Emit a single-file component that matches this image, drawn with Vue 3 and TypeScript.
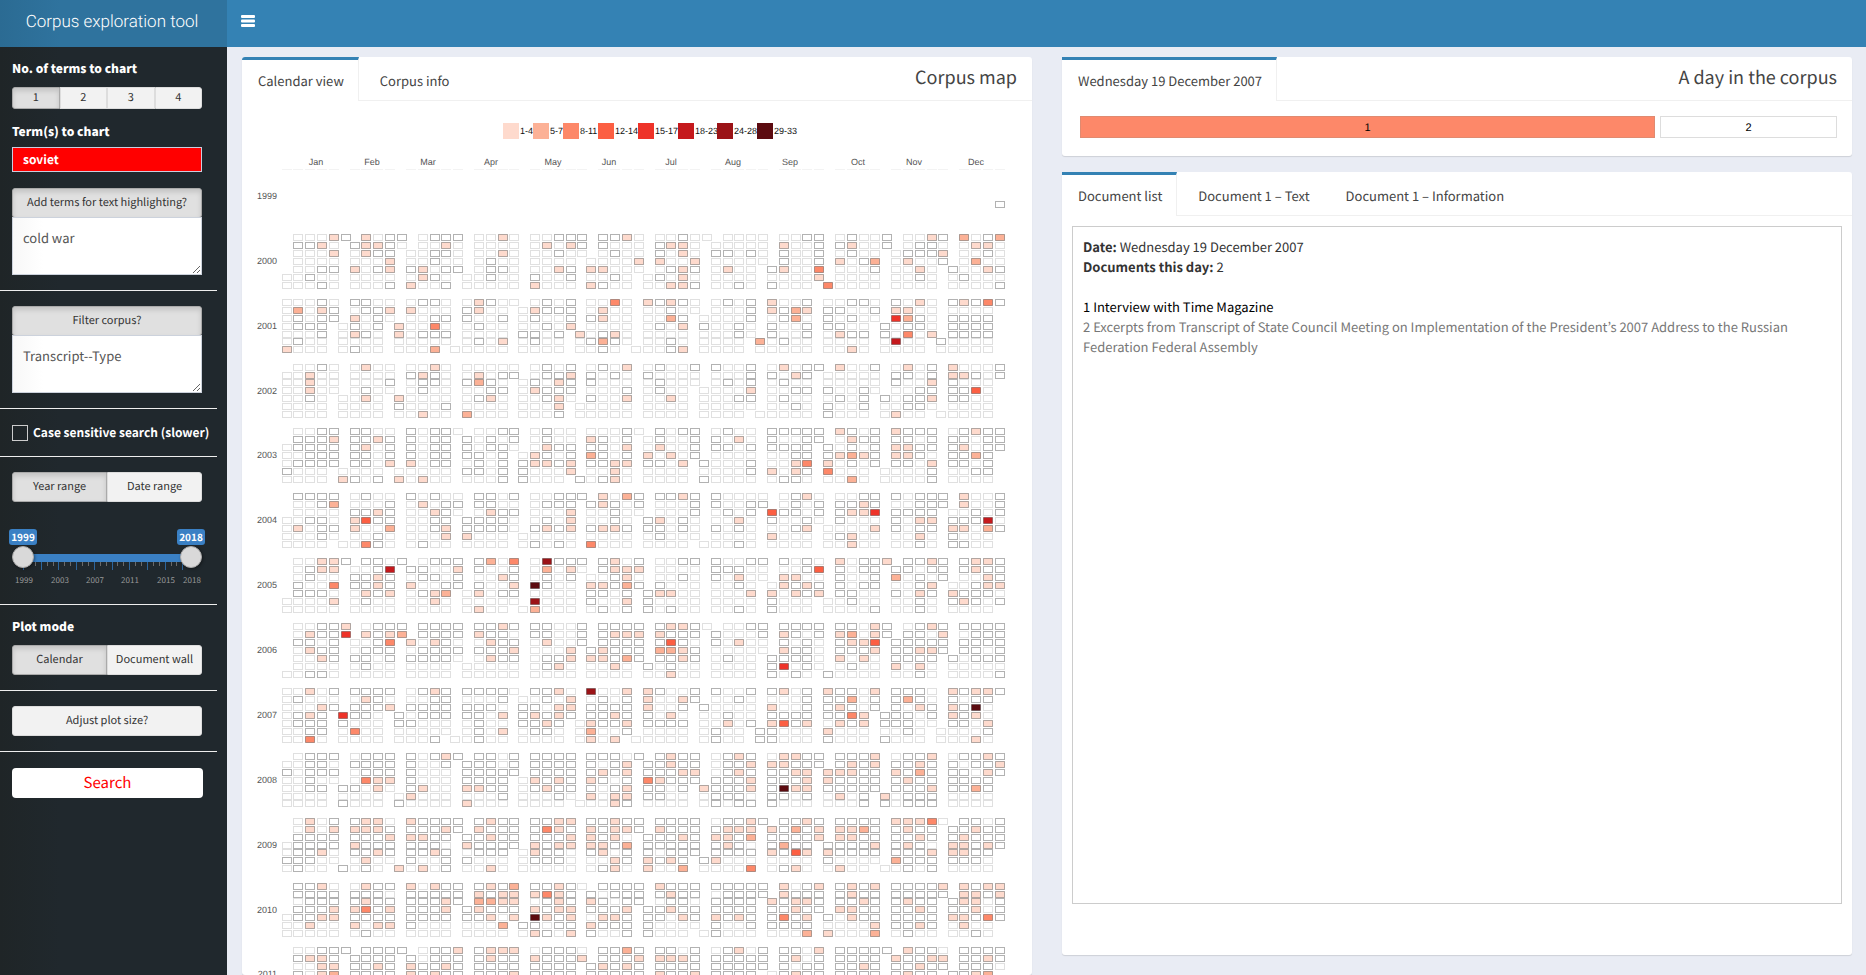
<script setup lang="ts">
import { ref } from 'vue'

type Cell = { x: number; y: number; kind: string }

// One entry per year; one line per weekday (Monday first); one group per month.
// "." no document, "o" document without a match, 1-8 legend class.
const calendar: Record<number, string[]> = {
  2000: [
    '...1o 1.oo .ooo ..1. ..ooo oo1. ..o.. .... ..oo .o..o ..1o 2.o2',
    'oo1. o11o. ..1. .... .1.1o o... o11. ..... 1..o o1..o .oo. .11.',
    '...1 .1oo ..oo. ..1. ..o.. .o.. o.1. oo.o. o..o .o.. .ooo1 ..o.',
    '.... ...1 ..o.. .o.. .... ....1 1..1 ..... o..o 1.o2 .1..o .2..',
    '..oo 1.o1 o1.oo .oo. ..1o 11... .o1o .1.. o1..3 ...o ..1. o..1o',
    '..o.. .... .1o. ..o.. o..o ..o. .o.1. .... ....1 .... ..o. .o...',
    '...o. ...o 1..o ..... 1... 1o.. ..11o ..o. o... 3.... .... ....o',
  ],
  2001: [
    '...o. oo.. .oo. .1o.. .o.o ..3. 1o1o. .o.o 1..o ..oo. o.1. o1o3o',
    '.2.1o .oo1 1... o1.. .1ooo .1.. ..o.. ...o 1o21 oo..o 11.. ....',
    '.o.oo 1.o. ..oo o..o .o..o o1.. ..2o ....o .o2. o.o.. 52o. oooo',
    '.ooo .o.o 1..3. .o.. ..o.1 .... .o.1 o..o. o..o oo.. o.oo. oooo',
    '...o .1o. 1.ooo .... oo.o 1.o1. .... ...o. o..o .1oo o.3.1 oooo',
    '.o.. .... ..... .o.1 .o.. .o2o. ..o. .... 2.o.. .... .6.. o....',
    '1... .o.. ...2 ..... .... ..o. ...o1 .... ..... ..1. .... .....',
  ],
  2002: [
    '..o. .1.. ..1. ..... .o.o .o.1 .o..o o..o .1.oo 1..o .1.o 1...o',
    '..1.. .... o1o. .1.oo .oo1 o.o. o.... ...o o.1o ..... oo.o 11o.o',
    '..1.. ...o .oo. o2o. .o.1o o... .o... .o.o .o.. ..... o..1 o...',
    '..1.. .o.. .o.. ..oo .1ooo ...o .o.. ....1 ..oo o..o. ..oo oo4.',
    '..o. ..1. 1.... .o1. ..o1. o..1 ..1. ...oo .o.. .o.o o.oo1 oo..',
    '.... .... o...o .... ...1 ..... .... ..... ..o. o..o ..oo. ....',
    '.... .... ..1.. 2... ...o ..... .... .... ..... o... .1.. .....',
  ],
  2003: [
    '..oo oo.. o.oo. ..oo .o.. ...o. o.oo .o.. ooooo 1o.o 1ooo .o1oo',
    'ooo1 oo1o o.oo o.o.o .o.. 1o.o .o..o o.1. o..oo .1oo oo.o oo.oo',
    '.oooo o1.o o.oo o.oo. .1oo oo.1 .1..o oo.o oooo o.o.o 11oo o1.oo',
    '..ooo oo.o o.oo oo.o .1o.o 2o.o 1.1.o .... ..oo o121o 11o. oo2o',
    '.oooo oo.1 1.oo .o.o o11o1 oo11 oo.1 o...o ..13 1.o.o oo.1 oo.o',
    'o... .... ..... oo.o o...1 ..1. .... ....o 1.1o 3... ....o ..oo',
    '.... 1o.o 1.1.. ...o o... o.o1. .... o.... .oo. ..2. ....o ....',
  ],
  2004: [
    'oooo .o.. o.o.. oo.o ..ooo 1.2o oo1o o.... .o1. ..oo o.ooo 1..o',
    '..o2 ...o .1.oo oo.. .ooo o1o.o ...o o..oo .o.o oo1o ..ooo 1..o',
    '.... oo1o ..1o. .1oo ...1 ..o.. ...o .o.o 4oo.o o115 oooo ..o.o',
    '..oo. 14oo ..oo oooo. .o.1 ..o. o1.o. ..1. o..o. o... o.11 ooo6.',
    '.1.oo 1..2 ..o1 oooo. o1o1 o11o oo.o. o.o. ..o1 ....1 o.oo 11.2o',
    '...o. ..o. ...1 1... ..... .... .o... .... 1... .o1.. ..1. o...',
    '.... ..3o. .o.. .... .o.o. 3... .... ...o. .... ..1.. ..o. oo..',
  ],
  2005: [
    '..11o oo.o .ooo o2.3 .7ooo o1.o ..oo o..oo o.o. 1.oo1 oo1o o11o',
    '.o11 ..o6 oo..1 o..o .2.1. o111 .... ooo.. ..o4 o.oo oo.oo o1oo',
    '.o.. oo1o .oo.o ..1o .o.o ..o1. ..o. o.1.. 11.. o..o 2.o.o ..1o',
    'o..3 oo1o 1..oo o..1 8o.. 11o2o o... ..o. .1o1o o.oo ..o1 ..o11',
    'ooo. .1o1 .o12 .1.oo .... oo.o o11.. ...1 1.1o1 oo.. o.1o 1ooo.',
    '....1 .o.. ..1. ..... 7... o..1 o.... .... o... ..o.. ..o. o1o.o',
    '..... .... .... .1.. .2... .o.o o.o.. ..o. o... ....o ..o. ....',
  ],
  2006: [
    '..oo1 .ooo oooo oo1o oo..o oooo o11o. ..oo oooo oo.1o .o1o oooo',
    '.1oo5 1o12 oooo 1oo. oo..o o111 1ooo o...o 1o.o 12.1o oo.1 .ooo',
    'oo.o ..o3 1.1o. .1oo .1..o oooo o4o. o.1.. o.o. o114 ooooo oooo',
    '.1oo .ooo .oooo ooo1 ...1 o1ooo 221o ..... 1oo. ooo1 oo11o oo.o',
    '..1o oo.o oooo. .1oo .oo1 11o2o oo1o .o.. oooo. 1.1. oooo o.ooo',
    '.... .o.. .... ..... .o1. ..1. o.o.. .... o5.o. .o.. 1.1. .....',
    '..oo. .... .... ..... .... .... ..1.. .... o.o. o.... ..o. ....o',
  ],
  2007: [
    '..1.o oooo .o1o oooo. oo1. 7..1 1o..o o..o o1.o 1oo.1 ooo. 1o11o',
    '.o... .1o. ..oo ...o ..o.1 .o.o 1..1o ..o. ...o oo2.o o2o. o.oo',
    '...1o ooo1 oooo ooo. oo.11 oooo 1..o o.... 1..o o1o.o o.1o 1o8.',
    '.o1o 5oo. o.ooo oo.1 o1o1o oo1o o.1. ..o.. oooo oo31 ooo.o 1o1.',
    '.ooo o... oo... .o.. oo1o .1oo1 oooo ..1.o 14o1 .1o1 ooo.. oo.1',
    '..oo .3.. ..... .o.1 .oo. .2..o .... .o.. oo... 1... ..o. ....o',
    '..3. .... ...o ..o.. .... .1.1 ..... .o.. oo... o... o... ...1.',
  ],
  2008: [
    '.ooo .ooo o.o1o oo.o oooo ooo.o o1oo .o1o .11oo ooo1 .oo1 .oo1o',
    '..oo. oooo o..o ooo.o oooo o.o1 oo1oo .oo1 11ooo o1o1 oo1o o.oo1',
    'o.ooo .ooo o... ooooo oooo o1o1 ooo11 .o1o oo11 111oo 1o2o oo.1o',
    '..o.. .311 o... oooo .1o1o 1o.o 31ooo ooo1 ooo1 1oooo o1oo oooo',
    '..oo oo.1. o1.. 11oo .o1oo o.o1 oo.o 1ooo1 o811 ooooo ooo1 oo2o',
    '.... .... .1... ...o ...o. 1.11 oo.. .ooo. oo.o .1.o 1.ooo ....',
    '.... o... o.... 1... .... ...1o .... .o.oo o... ...o o.ooo ....',
  ],
  2009: [
    '.1.o o11. 1oooo o1oo oo11 oo1oo oooo .oo1o oo1o oooo 1113. oo.o',
    '.1.1 111o ooo1o 1ooo o31o 1o11o 1ooo o111 1o2o1 112o o1oo oo1oo',
    'oooo ooo1 11oo oo1oo ooo1 1o1. ooo1o 11o2 oooo1 11oo oo1o o1ooo',
    '.oooo 1ooo ooo. 1oooo 1o11 11o2 ooooo o1o. o2oo oooo1 o1o. 11o1o',
    '.oo1. oo1o oo1o .ooo .1oo. o1.o o.ooo oooo 1o41 1oooo ooo1 11oo',
    'ooo.. .1.. o..o o... .ooo. ..1o 1o1o o1... .... o.... 2ooo ooo.',
    '.o.. o.o. 1.1.o ..1. ..... .o1. 1..2 ....3 .o1. .1.. ..o.o ....',
  ],
  2010: [
    'oo1. .1oo 1.1oo o1o2 oo1o. oooo 1ooo ooooo 1.o1 o1o1 oooo1 1o11',
    'oooo ooo. ooooo 1o11 131o o.ooo o1oo .oooo 1ooo o1oo ooooo 11o1',
    '.ooo o1oo ooo1o 2211 .o1o 1o.oo .oo. oooo 1o11o oo1o o1oo o11.o',
    'ooo1 13o1 ooo1 o1ooo 1o11 ooo1 oo1oo oooo oo1oo 11oo oo1o oo1.o',
    '.oo11 oooo oooo oo1.1 81o1 .11o oo.1o 1o1o o3o1 o.1oo oooo 11o3o',
    '..1.. 1.11 o... ...2 oo.oo 1ooo o.... o..o oooo ....1 oo1o .1..',
    '..... .o.. .... .... .1o.1 o..o o... .o... ...2 1...2 .o.. ..o.',
  ],
  2011: [
    '..ooo oooo .oo1 o111 .ooo. oo2o oo.o .o1.o oo.1 ooooo 1oo. oooo',
    'o11o oooo o.ooo o1oo 1ooo1 ooo1 111o ooooo o1.o oooo 1oo11 oo1o',
    '..11 oo1o 1oo1o oooo oooo o1o1o oooo ooooo o.oo oo1o oo1oo ooo.',
    'o.12 oooo 1o1oo ooo1 oooo ooooo 1oo1 oooo .o1oo oooo o1oo oo12',
  ],
}

const firstYear = 1999
const weekStep = 11.77
const monthGap = 9.17
const dayStep = 7.94
const yearStep = 64.87

const cellX = (week: number, month: number) =>
  Math.round(44.7 + week * weekStep + month * monthGap - 5) + 0.5
const cellY = (year: number, day: number) =>
  Math.round(71.5 + (year - firstYear) * yearStep + day * dayStep - 3.5) + 0.5

const weekdayOf = (year: number, month: number, day: number) =>
  (new Date(Date.UTC(year, month, day)).getUTCDay() + 6) % 7

const weekOf = (year: number, month: number, day: number) => {
  const dayOfYear = (Date.UTC(year, month, day) - Date.UTC(year, 0, 1)) / 86400000
  return Math.floor((dayOfYear + weekdayOf(year, 0, 1)) / 7)
}

function buildCells(): Cell[] {
  const list: Cell[] = []
  for (const [key, rows] of Object.entries(calendar)) {
    const year = Number(key)
    rows.forEach((row, weekday) => {
      row.split(' ').forEach((group, month) => {
        const first = ((weekday - weekdayOf(year, month, 1) + 7) % 7) + 1
        group.split('').forEach((mark, i) => {
          const week = weekOf(year, month, first + i * 7)
          const kind = mark === '.' ? 'none' : mark === 'o' ? 'zero' : 'c' + mark
          list.push({ x: cellX(week, month), y: cellY(year, weekday), kind })
        })
      })
    })
  }
  // Light cells first so that stronger outlines stay on top.
  const weight = (c: Cell) => (c.kind === 'none' ? 0 : c.kind === 'zero' ? 1 : 2)
  list.sort((a, b) => weight(a) - weight(b))
  list.push({ x: cellX(52, 11), y: cellY(1999, 4), kind: 'zero' })
  return list
}

const cells = buildCells()

const headTicks: number[] = [cellX(0, 0)]
for (let month = 0; month < 12; month++) {
  const first = ((7 - weekdayOf(1999, month, 1)) % 7) + 1
  const days = new Date(Date.UTC(1999, month + 1, 0)).getUTCDate()
  for (let d = first; d <= days; d += 7) headTicks.push(cellX(weekOf(1999, month, d), month))
}

const years = Array.from({ length: 13 }, (_, i) => firstYear + i)
const yearY = (year: number) => Math.round(98 + (year - firstYear) * yearStep)

const months = [
  { name: 'Jan', x: 74 }, { name: 'Feb', x: 130 }, { name: 'Mar', x: 186 },
  { name: 'Apr', x: 249 }, { name: 'May', x: 311 }, { name: 'Jun', x: 367 },
  { name: 'Jul', x: 429 }, { name: 'Aug', x: 491 }, { name: 'Sep', x: 548 },
  { name: 'Oct', x: 616 }, { name: 'Nov', x: 672 }, { name: 'Dec', x: 734 },
]

const legend = [
  { label: '1-4', x: 261 }, { label: '5-7', x: 291 }, { label: '8-11', x: 321 },
  { label: '12-14', x: 356 }, { label: '15-17', x: 396 }, { label: '18-23', x: 436 },
  { label: '24-28', x: 475 }, { label: '29-33', x: 515 },
]

const termCount = ref(1)
const term = ref('soviet')
const highlight = ref('cold war')
const filter = ref('Transcript--Type')
const caseSensitive = ref(false)
const rangeMode = ref('Year range')
const plotMode = ref('Calendar')
const fromYear = ref(1999)
const toYear = ref(2018)

const scaleTicks = Array.from({ length: 29 }, (_, i) => ({
  x: Math.round(11 + i * 5.9),
  major: i % 3 === 0,
}))
const scaleLabels = [
  { text: '1999', x: 12 }, { text: '2003', x: 48 }, { text: '2007', x: 83 },
  { text: '2011', x: 118 }, { text: '2015', x: 154 }, { text: '2018', x: 180 },
]
</script>

<template>
  <div class="app">
    <header class="topbar">
      <div class="brand">Corpus exploration tool</div>
      <button class="menu" type="button" aria-label="Toggle navigation">
        <svg width="14" height="12" viewBox="0 0 14 12" aria-hidden="true">
          <rect width="14" height="3" rx="1" />
          <rect y="4.5" width="14" height="3" rx="1" />
          <rect y="9" width="14" height="3" rx="1" />
        </svg>
      </button>
    </header>

    <aside class="sidebar">
      <section class="block first">
        <h4 class="label">No. of terms to chart</h4>
        <div class="group small">
          <button
            v-for="n in 4" :key="n" type="button" class="btn"
            :class="{ active: termCount === n }" @click="termCount = n"
          >{{ n }}</button>
        </div>
        <label class="label second" for="term">Term(s) to chart</label>
        <input id="term" v-model="term" class="term" type="text">
        <button type="button" class="btn wide active add">Add terms for text highlighting?</button>
        <textarea v-model="highlight" class="area" aria-label="Terms for text highlighting"></textarea>
      </section>

      <section class="block">
        <button type="button" class="btn wide active">Filter corpus?</button>
        <textarea v-model="filter" class="area" aria-label="Corpus filter"></textarea>
      </section>

      <section class="block">
        <label class="check">
          <input v-model="caseSensitive" type="checkbox">
          <span>Case sensitive search (slower)</span>
        </label>
      </section>

      <section class="block">
        <div class="group">
          <button
            v-for="m in ['Year range', 'Date range']" :key="m" type="button" class="btn"
            :class="{ active: rangeMode === m }" @click="rangeMode = m"
          >{{ m }}</button>
        </div>
        <div class="slider">
          <div class="tags"><span>{{ fromYear }}</span><span>{{ toYear }}</span></div>
          <div class="rail">
            <div class="fill"></div>
            <svg class="scale" width="190" height="28" viewBox="0 0 190 28" aria-hidden="true">
              <line
                v-for="(t, i) in scaleTicks" :key="i" :x1="t.x + 0.5" :x2="t.x + 0.5"
                y1="0" :y2="t.major ? 8 : 4" :class="t.major ? 'major' : 'minor'"
              />
              <text v-for="l in scaleLabels" :key="l.text" :x="l.x" y="21">{{ l.text }}</text>
            </svg>
            <input v-model.number="fromYear" type="range" min="1999" max="2018" aria-label="First year">
            <input v-model.number="toYear" type="range" min="1999" max="2018" aria-label="Last year">
          </div>
        </div>
      </section>

      <section class="block plot">
        <h4 class="label">Plot mode</h4>
        <div class="group">
          <button
            v-for="m in ['Calendar', 'Document wall']" :key="m" type="button" class="btn"
            :class="{ active: plotMode === m }" @click="plotMode = m"
          >{{ m }}</button>
        </div>
      </section>

      <section class="block">
        <button type="button" class="btn wide">Adjust plot size?</button>
      </section>

      <section class="block last">
        <button type="button" class="search">Search</button>
      </section>
    </aside>

    <main class="content">
      <section class="panel map">
        <nav class="tabs">
          <a href="#calendar" class="tab on">Calendar view</a>
          <a href="#info" class="tab">Corpus info</a>
          <h2>Corpus map</h2>
        </nav>
        <svg class="chart" viewBox="0 0 790 900" role="img" aria-label="Corpus calendar">
          <g v-for="(l, i) in legend" :key="l.label">
            <rect :x="l.x" y="22" width="16" height="16" :class="'k' + (i + 1)" />
            <text class="legend" :x="l.x + 17" y="33">{{ l.label }}</text>
          </g>
          <text v-for="m in months" :key="m.name" class="axis mid" :x="m.x" y="64">{{ m.name }}</text>
          <text v-for="y in years" :key="y" class="axis end" x="35" :y="yearY(y)">{{ y }}</text>
          <rect v-for="(x, i) in headTicks" :key="'t' + i" class="head" :x="x - 0.5" y="68" width="10" height="1" />
          <rect
            v-for="(c, i) in cells" :key="i" class="cell" :class="c.kind"
            :x="c.x" :y="c.y" width="9" height="6"
          />
        </svg>
      </section>

      <div class="right">
        <section class="panel">
          <nav class="tabs">
            <a href="#day" class="tab on">Wednesday 19 December 2007</a>
            <h2>A day in the corpus</h2>
          </nav>
          <div class="docs">
            <button type="button" class="doc hit">1</button>
            <button type="button" class="doc">2</button>
          </div>
        </section>

        <section class="panel reader">
          <nav class="tabs">
            <a href="#list" class="tab on">Document list</a>
            <a href="#text" class="tab">Document 1 – Text</a>
            <a href="#information" class="tab">Document 1 – Information</a>
          </nav>
          <div class="listing">
            <p><b>Date:</b> Wednesday 19 December 2007</p>
            <p><b>Documents this day:</b> 2</p>
            <p class="entry current">1 Interview with Time Magazine</p>
            <p class="other">2 Excerpts from Transcript of State Council Meeting on Implementation of the President’s 2007 Address to the Russian Federation Federal Assembly</p>
          </div>
        </section>
      </div>
    </main>
  </div>
</template>

<style>
body {
  margin: 0;
  background: #e9ecf4;
}
</style>

<style scoped>
.app {
  display: grid;
  grid-template-columns: 227px 1fr;
  grid-template-rows: 47px 1fr;
  height: 100vh;
  overflow: hidden;
  background: #e9ecf4;
  color: #333;
  font: 13px/20px "Noto Sans CJK KR", "Open Sans", sans-serif;
  text-rendering: geometricPrecision;
}
.app * {
  box-sizing: border-box;
}
button,
input,
textarea {
  font: inherit;
  margin: 0;
  text-rendering: inherit;
}

.topbar {
  grid-column: 1 / -1;
  display: flex;
  background: #3482b4;
}
.brand {
  width: 227px;
  background: linear-gradient(90deg, #2b6b93, #2f739e 60px);
  color: #fff;
  text-align: center;
  font: 300 17px/45px Roboto, "Liberation Sans", sans-serif;
  padding-right: 3px;
}
.menu {
  width: 42px;
  padding: 0 0 4px;
  border: 0;
  background: none;
  fill: #fff;
}

.sidebar {
  background: linear-gradient(90deg, #1f2527, #20282d 60px);
  color: #fff;
}
.block {
  width: 217px;
  padding: 15px 15px 15px 12px;
  border-bottom: 1px solid #eee;
}
.block.first {
  padding-top: 12px;
}
.block.plot {
  padding-top: 12px;
}
.block.last {
  padding: 16px 14px 16px 12px;
  border: 0;
}
.label {
  display: block;
  margin: 0 0 8px;
  font-size: 12px;
  line-height: 20px;
  font-weight: 900;
}
.label.second {
  margin: 13px 0 5px;
}
.btn {
  height: 30px;
  padding: 0 0 2px;
  border: 1px solid #ddd;
  background: #f2f2f2;
  color: #333;
  font-size: 11px;
  line-height: 18px;
  text-align: center;
}
.btn.active {
  border-color: #aaa;
  background: #e0e0e0;
  box-shadow: inset 0 3px 5px rgba(0, 0, 0, 0.13);
}
.group {
  display: flex;
}
.group .btn {
  flex: 1 1 0;
  white-space: nowrap;
}
.group .btn:first-child {
  border-radius: 3px 0 0 3px;
}
.group .btn:last-child {
  border-radius: 0 3px 3px 0;
}
.group.small .btn {
  height: 22px;
}
.wide {
  display: block;
  width: 100%;
  border-radius: 3px;
}
.add {
  margin-top: 16px;
}
.term {
  display: block;
  width: 100%;
  height: 25px;
  padding: 0 10px;
  border: 1px solid #ccd;
  border-radius: 0;
  background: #f00;
  color: #fff;
  font-size: 12px;
  font-weight: 700;
}
.area {
  display: block;
  width: 100%;
  height: 58px;
  margin-top: -1px;
  padding: 10px;
  border: 1px solid #ccd2dc;
  border-radius: 0;
  background: linear-gradient(90deg, #f8f8f8, #fff 30px);
  color: #555;
  line-height: 20px;
}
.check {
  display: flex;
  align-items: center;
  gap: 5px;
  height: 17px;
  font-size: 12px;
  line-height: 17px;
  font-weight: 700;
  white-space: nowrap;
}
.check input {
  flex: none;
  appearance: none;
  width: 16px;
  height: 16px;
  border: 1px solid #ccc;
}
.slider {
  margin-top: 27px;
}
.tags {
  display: flex;
  justify-content: space-between;
  margin: 0 -3px;
}
.tags span {
  width: 28px;
  border-radius: 3px;
  background: #3a80c4;
  color: #fff;
  font-size: 10px;
  line-height: 16px;
  font-weight: 700;
  text-align: center;
}
.rail {
  position: relative;
  height: 44px;
}
.fill {
  position: absolute;
  top: 9px;
  left: 11px;
  right: 11px;
  height: 8px;
  background: #3a80c4;
}
.scale {
  position: absolute;
  top: 17px;
  left: 0;
}
.scale text {
  fill: #999;
  font-size: 8px;
  text-anchor: middle;
}
.major {
  stroke: #2d659b;
}
.minor {
  stroke: #6a6a6a;
}
.rail input {
  position: absolute;
  top: 1px;
  left: 0;
  width: 100%;
  height: 22px;
  appearance: none;
  background: none;
  pointer-events: none;
}
.rail input::-webkit-slider-thumb {
  appearance: none;
  width: 22px;
  height: 22px;
  border: 1px solid #aaa;
  border-radius: 50%;
  background: #d9d9d9;
  box-shadow: 1px 1px 3px rgba(0, 0, 0, 0.4);
  pointer-events: auto;
}
.search {
  width: 100%;
  height: 30px;
  padding: 0;
  border: 0;
  border-radius: 4px;
  background: #fff;
  color: #f00;
  font-size: 15px;
}

.content {
  display: flex;
  gap: 30px;
  min-height: 0;
  padding: 10px 14px 20px 15px;
}
.panel {
  background: #fff;
  border-radius: 3px;
  box-shadow: 0 1px 1px rgba(0, 0, 0, 0.12);
}
.map {
  flex: 1 1 0;
  min-width: 0;
  margin-bottom: -20px;
  overflow: hidden;
}
.right {
  flex: 1 1 0;
  min-width: 0;
  display: flex;
  flex-direction: column;
  gap: 16px;
}
.tabs {
  display: flex;
  height: 44px;
  border-bottom: 1px solid #f0f0f0;
}
.tab {
  height: 44px;
  margin-right: 5px;
  padding: 14px 14px 0 16px;
  border-right: 1px solid transparent;
  color: #444;
  text-decoration: none;
  white-space: nowrap;
}
.tab.on {
  padding-top: 11px;
  border-top: 3px solid #3482b4;
  border-right-color: #f0f0f0;
  background: #fff;
}
.tabs h2 {
  margin: 0 15px 0 auto;
  color: #444;
  font-size: 18px;
  font-weight: 400;
  line-height: 40px;
}
.chart {
  display: block;
  width: 100%;
}
.chart text {
  font: 9px "Liberation Sans", Arial, sans-serif;
}
.legend {
  fill: #111;
}
.axis {
  fill: #555;
}
.mid {
  text-anchor: middle;
}
.end {
  text-anchor: end;
}
.head {
  fill: #f3f3f3;
}
.cell {
  fill: #fff;
  stroke: #000;
  stroke-opacity: 0.3;
}
.cell.none {
  stroke-opacity: 0.12;
}
.k1,
.cell.c1 { fill: #fedacd; }
.k2,
.cell.c2 { fill: #fcb196; }
.k3,
.cell.c3 { fill: #fd8869; }
.k4,
.cell.c4 { fill: #fc5f43; }
.k5,
.cell.c5 { fill: #ee3329; }
.k6,
.cell.c6 { fill: #c5191d; }
.k7,
.cell.c7 { fill: #9b1317; }
.k8,
.cell.c8 { fill: #5c0b10; }

.docs {
  display: flex;
  gap: 5px;
  padding: 15px 15px 18px 18px;
}
.doc {
  flex: 176 1 0;
  height: 22px;
  padding: 1px 0 0;
  border: 1px solid #ddd;
  background: #fff;
  color: #000;
  font: 11px "Liberation Sans", Arial, sans-serif;
}
.doc.hit {
  flex-grow: 576;
  border-color: #e08a70;
  background: #fd8869;
}
.reader {
  flex: 1;
  display: flex;
  flex-direction: column;
}
.listing {
  flex: 1;
  margin: 10px 10px 51px;
  padding: 10px;
  border: 1px solid #ccc;
}
.listing p {
  margin: 0;
}
.listing .entry {
  margin-top: 20px;
}
.current {
  color: #000;
}
.other {
  color: #777;
}
</style>
